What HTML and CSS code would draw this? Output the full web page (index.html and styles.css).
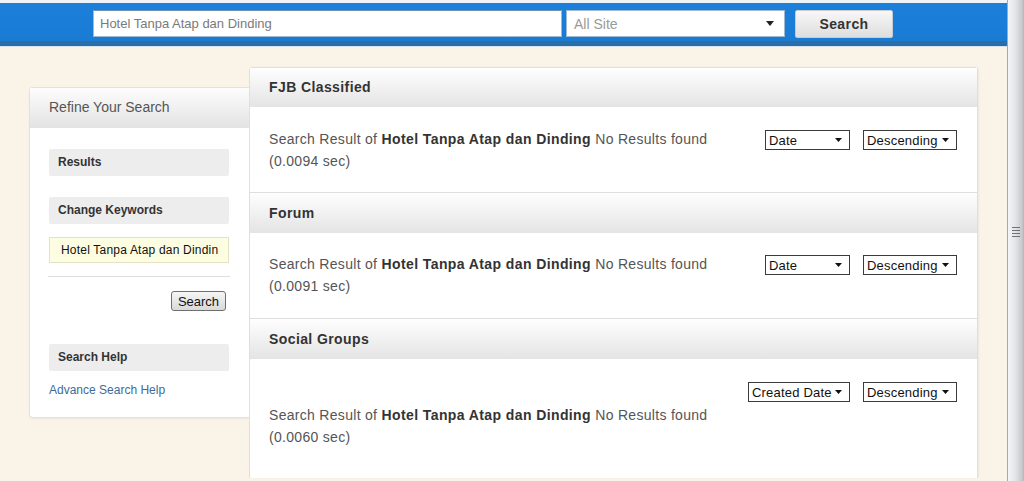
FILE: index.html
```html
<!DOCTYPE html>
<html lang="en">
<head>
    <meta charset="UTF-8">
    <meta name="viewport" content="width=device-width, initial-scale=1.0">
    <title>Search Result</title>
    <link rel="stylesheet" href="styles.css">
</head>
<body>
<div class="window">
    <div class="page">
        <div class="topbar">
            <div class="top-input">Hotel Tanpa Atap dan Dinding</div>
            <div class="top-select">
                <span>All Site</span>
                <svg class="arrow" width="8" height="5" viewBox="0 0 8 5"><path d="M0 0h8L4 5z" fill="#222"/></svg>
            </div>
            <button class="top-button">Search</button>
        </div>

        <div class="content">
            <div class="sidebar">
                <div class="side-head">Refine Your Search</div>
                <div class="side-body">
                    <div class="side-bar">Results</div>
                    <div class="side-bar">Change Keywords</div>
                    <div class="side-input">Hotel Tanpa Atap dan Dindin</div>
                    <div class="side-rule"></div>
                    <div class="side-actions"><button class="small-button">Search</button></div>
                    <div class="side-bar help">Search Help</div>
                    <a class="side-link" href="#">Advance Search Help</a>
                </div>
            </div>

            <div class="main">
                <div class="panel">
                    <div class="panel-head">FJB Classified</div>
                    <div class="panel-body">
                        <p class="result">Search Result of <b>Hotel Tanpa Atap dan Dinding</b> No Results found (0.0094 sec)</p>
                        <div class="controls">
                            <div class="select date"><span>Date</span><svg width="7" height="4" viewBox="0 0 7 4"><path d="M0 0h7L3.5 4z" fill="#111"/></svg></div>
                            <div class="select order"><span>Descending</span><svg width="7" height="4" viewBox="0 0 7 4"><path d="M0 0h7L3.5 4z" fill="#111"/></svg></div>
                        </div>
                    </div>
                </div>
                <div class="panel">
                    <div class="panel-head">Forum</div>
                    <div class="panel-body">
                        <p class="result">Search Result of <b>Hotel Tanpa Atap dan Dinding</b> No Results found (0.0091 sec)</p>
                        <div class="controls">
                            <div class="select date"><span>Date</span><svg width="7" height="4" viewBox="0 0 7 4"><path d="M0 0h7L3.5 4z" fill="#111"/></svg></div>
                            <div class="select order"><span>Descending</span><svg width="7" height="4" viewBox="0 0 7 4"><path d="M0 0h7L3.5 4z" fill="#111"/></svg></div>
                        </div>
                    </div>
                </div>
                <div class="panel">
                    <div class="panel-head">Social Groups</div>
                    <div class="panel-body stacked">
                        <div class="controls">
                            <div class="select created"><span>Created Date</span><svg width="7" height="4" viewBox="0 0 7 4"><path d="M0 0h7L3.5 4z" fill="#111"/></svg></div>
                            <div class="select order"><span>Descending</span><svg width="7" height="4" viewBox="0 0 7 4"><path d="M0 0h7L3.5 4z" fill="#111"/></svg></div>
                        </div>
                        <p class="result">Search Result of <b>Hotel Tanpa Atap dan Dinding</b> No Results found (0.0060 sec)</p>
                    </div>
                </div>
            </div>
        </div>
    </div>

    <div class="scrollbar">
        <div class="grip"><i></i><i></i><i></i><i></i></div>
    </div>
</div>
</body>
</html>
```

FILE: styles.css
```css
* {
    margin: 0;
    padding: 0;
    box-sizing: border-box;
}
body {
    font-family: "Liberation Sans", Arial, sans-serif;
    background-color: #faf3e8;
    overflow: hidden;
}
.window {
    display: flex;
    height: 100vh;
}
.page {
    flex: 1;
    overflow: hidden;
}

/* top search bar */
.topbar {
    display: flex;
    align-items: flex-start;
    height: 47px;
    padding: 7px 0 0 93px;
    border-top: 3px solid #eef3f8;
    background: linear-gradient(#1b80db, #1a7bd3 86%, #2a6ea9 86%, #2a6ea9 97%, #d6e3ee 97%);
}
.top-input {
    width: 469px;
    height: 27px;
    padding: 0 6px;
    background: #fff;
    border: 1px solid #9fb9d2;
    border-top-color: #6f90b0;
    color: #7a7a7a;
    font-size: 13px;
    line-height: 25px;
}
.top-select {
    display: flex;
    align-items: center;
    justify-content: space-between;
    width: 219px;
    height: 27px;
    margin-left: 4px;
    padding: 0 10px 0 7px;
    background: #fff;
    border: 1px solid #9fb9d2;
    color: #9a9a9a;
    font-size: 14px;
}
.top-button {
    width: 98px;
    height: 28px;
    margin-left: 10px;
    border: 1px solid #c8ccd0;
    border-radius: 2px;
    background: linear-gradient(#f7f7f7, #dedede);
    color: #333;
    font-family: "Liberation Sans", Arial, sans-serif;
    font-size: 14px;
    font-weight: bold;
    letter-spacing: 0.4px;
}

/* page content */
.content {
    display: flex;
    align-items: flex-start;
    padding: 20px 0 0 29px;
}

.sidebar {
    width: 220px;
    height: 331px;
    margin-top: 20px;
    background: #fff;
    border: 1px solid #e4e1dc;
    border-right: none;
    border-radius: 4px 0 0 4px;
    box-shadow: 0 1px 2px rgba(0, 0, 0, 0.06);
}
.side-head {
    height: 40px;
    padding-left: 19px;
    background: linear-gradient(#fdfdfd, #e3e3e3);
    color: #555;
    font-size: 14px;
    line-height: 39px;
}
.side-body {
    padding: 21px 20px 0 19px;
}
.side-bar {
    height: 27px;
    margin-bottom: 21px;
    padding-left: 9px;
    background: #ededed;
    border-radius: 2px;
    color: #333;
    font-size: 12px;
    font-weight: bold;
    line-height: 27px;
}
.side-bar:nth-child(2) {
    margin-bottom: 13px;
}
.side-input {
    height: 26px;
    padding-left: 11px;
    background: #fdfde1;
    border: 1px solid #e4e2c4;
    color: #111;
    font-size: 12px;
    letter-spacing: 0.2px;
    line-height: 24px;
    white-space: nowrap;
    overflow: hidden;
}
.side-rule {
    height: 1px;
    margin: 13px -1px 14px -1px;
    background: #dedede;
}
.side-actions {
    display: flex;
    justify-content: flex-end;
    padding-right: 3px;
    margin-bottom: 33px;
}
.small-button {
    width: 55px;
    height: 20px;
    border: 1px solid #6f6f6f;
    border-radius: 3px;
    background: linear-gradient(#f6f6f6, #d9d9d9);
    color: #111;
    font-family: "Liberation Sans", Arial, sans-serif;
    font-size: 13px;
}
.side-bar.help {
    margin-bottom: 12px;
}
.side-link {
    display: block;
    color: #3d6b98;
    font-size: 12px;
    text-decoration: none;
}

.main {
    width: 729px;
    background: #fff;
    border: 1px solid #e1dfdb;
    border-bottom: none;
    border-radius: 4px 4px 0 0;
    box-shadow: 1px 0 2px rgba(0, 0, 0, 0.05);
}
.panel + .panel {
    border-top: 1px solid #dedede;
}
.panel-head {
    height: 40px;
    padding-left: 19px;
    background: linear-gradient(#fefefe, #e4e4e4);
    color: #333;
    font-size: 14px;
    font-weight: bold;
    letter-spacing: 0.4px;
    line-height: 40px;
}
.panel:first-child .panel-head {
    height: 39px;
    line-height: 39px;
}
.panel-body {
    display: flex;
    justify-content: space-between;
    align-items: flex-start;
    padding: 20px 20px 21px 19px;
}
.panel:first-child .panel-body {
    padding-top: 21px;
    padding-bottom: 20px;
}
.panel-body.stacked {
    flex-direction: column;
    align-items: stretch;
    padding-bottom: 30px;
}
.result {
    width: 470px;
    color: #555;
    font-size: 14px;
    letter-spacing: 0.3px;
    line-height: 22px;
}
.result b {
    color: #333;
    letter-spacing: 0.4px;
}
.controls {
    display: flex;
    justify-content: flex-end;
    gap: 13px;
    margin-top: 2px;
}
.stacked .controls {
    margin-top: 3px;
    margin-bottom: 2px;
}
.select {
    display: flex;
    align-items: center;
    justify-content: space-between;
    height: 20px;
    padding: 0 7px 0 3px;
    border: 1px solid #3a3a3a;
    background: #fff;
    color: #111;
    font-size: 13px;
    letter-spacing: 0.2px;
}
.select.date {
    width: 85px;
}
.select.order {
    width: 94px;
}
.select.created {
    width: 102px;
}

/* fake window scrollbar */
.scrollbar {
    width: 17px;
    display: flex;
    align-items: flex-start;
    justify-content: center;
    padding-top: 227px;
    border-left: 1px solid #a8a8a8;
    background: linear-gradient(90deg, #f4f5f7, #e3e5e8 45%, #c9cacd 85%, #b4b5b8);
}
.grip {
    display: flex;
    flex-direction: column;
    gap: 2px;
    width: 8px;
}
.grip i {
    display: block;
    height: 1px;
    background: #6e7176;
}
```
